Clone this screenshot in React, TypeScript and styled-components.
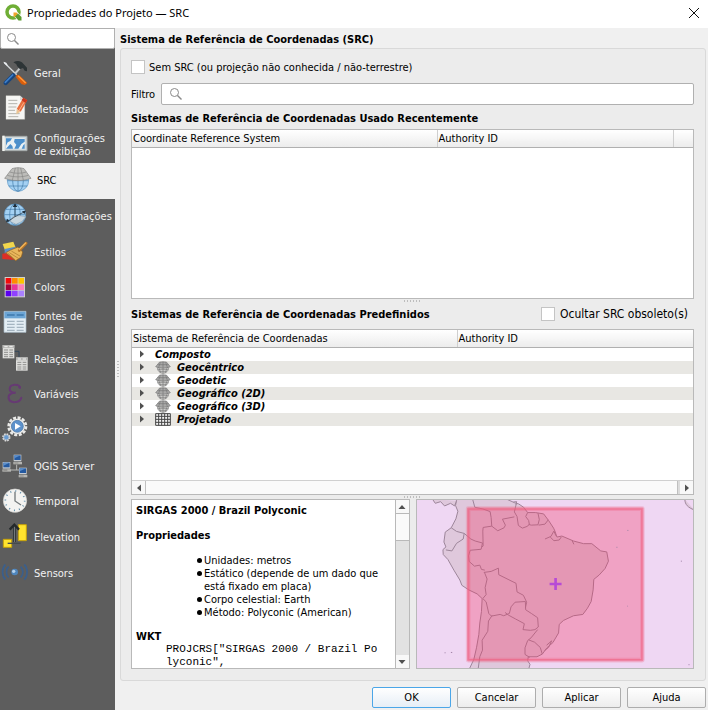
import React from "react";
import styled, { createGlobalStyle, css } from "styled-components";

const uiFont = `"DejaVu Sans Condensed", "Noto Sans", sans-serif`;

const GlobalStyle = createGlobalStyle`
  *, *::before, *::after { box-sizing: border-box; }
  body { margin: 0; background: #f0f0f0; color: #000; font: 11px/13px ${uiFont}; }
  button, input { font: inherit; color: inherit; }
  h1, h2, h3, p, ul, pre { margin: 0; padding: 0; font-size: inherit; }
`;

const Window = styled.div`
  display: flex;
  flex-direction: column;
  min-height: 100vh;
`;

const TitleBar = styled.header`
  display: flex;
  align-items: center;
  gap: 5px;
  height: 28px;
  padding: 0 8px 3px 5px;
  background: #fff;
`;

const WindowTitle = styled.h1`
  flex: 1;
  font: 400 11px/16px "Noto Sans", "Open Sans", sans-serif;
`;

const CloseButton = styled.button`
  display: flex;
  padding: 0;
  border: 0;
  background: none;
`;

const Body = styled.div`
  display: flex;
  flex: 1;
`;

const Sidebar = styled.nav`
  display: flex;
  flex-direction: column;
  flex: 0 0 115px;
  min-width: 0;
  background: #5d5d5d;
`;

const SearchBox = styled.div<{ $large?: boolean }>`
  display: flex;
  align-items: center;
  flex: ${(p) => (p.$large ? "1" : "none")};
  height: ${(p) => (p.$large ? "22px" : "21px")};
  padding-left: ${(p) => (p.$large ? "7px" : "5px")};
  border: 1px solid #b0b0b0;
  border-radius: ${(p) => (p.$large ? "2px" : "0 0 2px 2px")};
  background: #fff;
`;

const SearchInput = styled.input`
  flex: 1;
  width: 0;
  min-width: 0;
  border: 0;
  outline: 0;
  background: none;
`;

const PageList = styled.ul`
  display: grid;
  grid-template-rows: repeat(15, 1fr);
  height: 535px;
  margin-top: 7px;
  list-style: none;
`;

const PageItem = styled.li`
  display: flex;
`;

const PageButton = styled.button<{ $active?: boolean }>`
  display: flex;
  align-items: center;
  gap: ${(p) => (p.$active ? "5px" : "2px")};
  width: 100%;
  padding: 0;
  border: 0;
  background: ${(p) => (p.$active ? "#f0f0f0" : "transparent")};
  color: ${(p) => (p.$active ? "#000" : "#f2f2f2")};
  line-height: 13px;
  text-align: left;
  white-space: pre;
`;

const IconSvg = styled.svg`
  flex: none;
  width: 32px;
  height: 32px;
`;

const Splitter = styled.div`
  display: flex;
  align-items: center;
  justify-content: center;
  width: 5px;
`;

const Dots = styled.span<{ $vertical?: boolean }>`
  width: ${(p) => (p.$vertical ? "2px" : "17px")};
  height: ${(p) => (p.$vertical ? "17px" : "2px")};
  background: repeating-linear-gradient(
    ${(p) => (p.$vertical ? "180deg" : "90deg")},
    #bdbdbd 0 1px,
    transparent 1px 3px
  );
`;

const Content = styled.main`
  display: flex;
  flex-direction: column;
  flex: 1;
  min-width: 0;
  padding: 5px 2px 2px 0;
`;

const Heading = styled.h2`
  font: 700 11px/13px ${uiFont};
`;

const Group = styled.section`
  display: flex;
  flex-direction: column;
  flex: 1;
  margin: 2px 0 6px;
  padding: 11px 11px 11px 10px;
  border: 1px solid #d9d9d9;
  border-radius: 3px;
  background: #ececec;
`;

const CheckLabel = styled.label<{ $large?: boolean }>`
  display: flex;
  align-items: center;
  gap: ${(p) => (p.$large ? "5px" : "4px")};
  ${(p) => p.$large && css`font-size: 12px;`}
`;

const CheckBox = styled.input`
  appearance: none;
  width: 14px;
  height: 14px;
  margin: 0;
  border: 1px solid #c4c4c4;
  background: #fff;
`;

const FilterRow = styled.div`
  display: flex;
  align-items: center;
  gap: 6px;
  margin: 9px 0 7px;
`;

const Frame = styled.div<{ $basis: string }>`
  display: flex;
  flex-direction: column;
  flex: 1 1 ${(p) => p.$basis};
  border: 1px solid #b9b9b9;
  background: #fff;
`;

const Table = styled.table`
  width: 100%;
  border-collapse: collapse;
  table-layout: fixed;
`;

const HeadCell = styled.th<{ $width?: string }>`
  width: ${(p) => p.$width ?? "auto"};
  height: 17px;
  padding: 0 1px;
  border-right: 1px solid #cfcfcf;
  border-bottom: 1px solid #b0b0b0;
  background: linear-gradient(#fff, #ececec);
  font-weight: 400;
  text-align: left;
  &:last-child { border-right: 0; }
`;

const Row = styled.tr`
  &:nth-child(even) { background: #e8e7e3; }
`;

const Cell = styled.td`
  height: 13px;
  padding: 0;
`;

const TreeLabel = styled.div`
  display: flex;
  align-items: center;
  height: 13px;
  padding-left: 6px;
  font: italic 700 11px/13px ${uiFont};
`;

const Expander = styled.button`
  display: flex;
  width: 17px;
  padding: 0;
  border: 0;
  background: none;
`;

const TreeIcon = styled.svg`
  width: 16px;
  height: 13px;
  margin-right: 6px;
`;

const SectionBar = styled.div`
  display: flex;
  align-items: center;
  justify-content: space-between;
  height: 26px;
  padding: 0 6px 4px 0;
`;

const SplitRow = styled.div`
  display: flex;
  align-items: center;
  justify-content: center;
  height: 4px;
`;

const HScroll = styled.div`
  display: flex;
  height: 14px;
  margin-top: auto;
  border-top: 1px solid #d0d0d0;
  background: #dcdcdc;
`;

const VScroll = styled.div`
  display: flex;
  flex-direction: column;
  width: 14px;
  border-left: 1px solid #b9b9b9;
  background: #e2e2e2;
`;

const ScrollButton = styled.button`
  display: flex;
  align-items: center;
  justify-content: center;
  flex: 0 0 13px;
  padding: 0;
  border: 0;
  background: #f8f8f8;
`;

const Thumb = styled.div<{ $vertical?: boolean }>`
  ${(p) =>
    p.$vertical
      ? css`
          height: 28px;
          margin-bottom: auto;
          border: solid #b9b9b9;
          border-width: 1px 0;
        `
      : css`
          flex: 1;
          margin-right: 2px;
          border: solid #c0c0c0;
          border-width: 0 1px;
        `}
  background: #fafafa;
`;

const Lower = styled.div`
  display: grid;
  grid-template-columns: 1fr 1fr;
  gap: 6px;
  flex: 0 0 170px;
`;

const InfoFrame = styled.div`
  display: flex;
  min-width: 0;
  border: 1px solid #b9b9b9;
  background: #fff;
`;

const InfoText = styled.div`
  flex: 1;
  height: 168px;
  min-width: 0;
  padding: 4px 0 0 4px;
  overflow: hidden;
`;

const InfoTitle = styled.h3`
  margin-bottom: 12px;
  font: 700 11px/13px ${uiFont};
`;

const WktTitle = styled(InfoTitle)`
  margin-bottom: 0;
`;

const Facts = styled.ul`
  margin-bottom: 11px;
  padding-left: 68px;
  list-style: none;
`;

const Fact = styled.li`
  position: relative;
  padding-right: 8px;
  &::before {
    position: absolute;
    top: 4px;
    left: -7px;
    width: 5px;
    height: 5px;
    border-radius: 50%;
    background: #000;
    content: "";
  }
`;

const Wkt = styled.pre`
  margin-left: 30px;
  font: 11px/13px "Liberation Mono", monospace;
`;

const MapFrame = styled.div`
  border: 1px solid #b9b9b9;
  background: #efd7f3;
  overflow: hidden;
`;

const MapSvg = styled.svg`
  display: block;
  width: 100%;
  height: 168px;
`;

const Footer = styled.footer`
  display: flex;
  justify-content: flex-end;
  gap: 6px;
`;

const DialogButton = styled.button<{ $primary?: boolean }>`
  width: 79px;
  height: 21px;
  padding: 0;
  border: 1px solid ${(p) => (p.$primary ? "#4ba6e8" : "#adadad")};
  border-radius: 2px;
  background: linear-gradient(#fff, ${(p) => (p.$primary ? "#e6eef6" : "#ededed")});
`;

const Magnifier = () => (
  <svg width="14" height="14" viewBox="0 0 14 14" fill="none" stroke="#8a8a8a" aria-hidden="true">
    <circle cx="5.5" cy="5.5" r="4" />
    <path d="M8.5 8.5 12.5 12.5" strokeWidth="1.4" />
  </svg>
);

const Logo = () => (
  <svg width="17" height="17" viewBox="0 0 34 34" aria-hidden="true">
    <circle cx="16" cy="16" r="12" fill="none" stroke="#6fae35" strokeWidth="7" />
    <path d="M15 15h9l10 11v8h-7L15 22z" fill="#fff" />
    <path d="M17 17h6l3 3-6 7-3-3z" fill="#f0a52b" />
    <path d="m20 25 6-6 7 7v7h-6z" fill="#5b9c30" />
  </svg>
);

const Globe = ({ cx, cy, r }: { cx: number; cy: number; r: number }) => (
  <g stroke="#3f78a8" strokeWidth="2" fill="none">
    <circle cx={cx} cy={cy} r={r} fill="#a4d1f3" stroke="#6098c5" />
    <ellipse cx={cx} cy={cy} rx={r / 2} ry={r} />
    <path d={`M${cx - r} ${cy}h${r * 2}M${cx} ${cy - r}v${r * 2}M${cx - r + 4} ${cy + r / 2}h${r * 2 - 8}M${cx - r + 4} ${cy - r / 2}h${r * 2 - 8}`} />
  </g>
);

const Computer = ({ x, y }: { x: number; y: number }) => (
  <g transform={`translate(${x} ${y})`}>
    <path d="M1 0h23v20H1z" fill="#c7ccd2" />
    <path d="M3 2h19v14H3z" fill="#2459a0" />
    <path d="M3 2h19L3 11z" fill="#5c8ec9" />
    <path d="M0 22h26v7H0z" fill="#b5b5b1" />
    <path d="M3 25h12" stroke="#7a7a78" strokeWidth="2" />
  </g>
);

const Sheet = ({ x, y }: { x: number; y: number }) => (
  <g transform={`translate(${x} ${y})`}>
    <path d="M0 0h35v40H0z" fill="#dededc" />
    <path d="M0 0h35v9H0z" fill="#b6b6b4" />
    <path d="M4 15h12M20 15h11M4 22h12M20 22h11M4 29h12M20 29h11M4 35h12M20 35h11" stroke="#8f8f8d" strokeWidth="3" />
    <path d="M5 5h10M20 5h10" stroke="#f4f4f4" strokeWidth="3" />
  </g>
);

const swatches = ["#f50a0a", "#ff8c00", "#ffc400", "#a8003c", "#e8359a", "#ff80b8", "#5a00f0", "#9040ff", "#a980ff"];

const icons: Record<string, React.ReactNode> = {
  general: (
    <>
      <path d="M13 14 50 50" stroke="#d5d9dc" strokeWidth="4" />
      <path d="m11 11 8 3 5 9-5-1-8-8z" fill="#eceff1" />
      <path d="M62 28 44 48" stroke="#c3c7ca" strokeWidth="6" />
      <path d="M40 52 17 75" stroke="#17457f" strokeWidth="13" strokeLinecap="round" />
      <path d="M38 51 16 73" stroke="#3e7fca" strokeWidth="5" strokeLinecap="round" />
      <path d="m50 50 8 2 24 23-8 6-9-2-17-21z" fill="#d95d0c" />
      <path d="m54 53 23 22" stroke="#ff9a3d" strokeWidth="4" />
      <path d="M40 13c12-7 23-5 30 4l11 12v11l-7-2-5-8-9 4-9-10c-1-5-3-7-11-11z" fill="#2d3436" />
    </>
  ),
  metadata: (
    <>
      <path d="M18 8h42l14 13v58H18z" fill="#f6f6f4" stroke="#d3d3cf" />
      <path d="M60 8v13h14" fill="#dadad6" />
      <path d="M25 22h27M25 32h27M25 42h24M25 52h20M25 62h34M25 71h30" stroke="#b3b3ae" strokeWidth="3" />
      <path d="m70 14 12 8-20 34-12-8z" fill="#e8703f" />
      <path d="m70 14 12 8-5 8-12-8z" fill="#c8361f" />
      <path d="m50 48 12 8-13 8z" fill="#e9c795" />
      <path d="m72 28-17 28" stroke="#ffb08b" strokeWidth="3" />
    </>
  ),
  view: (
    <>
      <path d="M8 22h73v43H8z" fill="#cfd8dc" stroke="#a6acad" strokeWidth="3" />
      <path d="M18 28h56v31H18z" fill="#e9f0f3" />
      <path d="m18 28 18 0-5 8-8 4-5 10zM18 59l13-14 6 6 2 8zM44 30h30v8l-10 7-9 14H43l6-12-7-8zM70 48l4-3v14h-9z" fill="#4b8fcb" />
      <path d="M7 20h7v46H7z" fill="#f2f3ef" />
    </>
  ),
  crs: (
    <>
      <Globe cx={54} cy={47} r={32} />
      <path d="M36 11c12-4 24-4 36 0l21 29c-25 9-54 9-79 0z" fill="#bdbdba" stroke="#858583" strokeWidth="2" />
      <path d="M46 9 37 45M62 9l8 36M54 8v39M29 21c16 5 34 5 50 0M22 31c20 6 43 6 63 0" fill="none" stroke="#858583" strokeWidth="2" />
    </>
  ),
  transform: (
    <>
      <Globe cx={45} cy={44} r={32} />
      <path d="m30 64 10-15 20-2 17 3-10 14-19 9z" fill="#c9d6de" stroke="#93a5b2" strokeWidth="2" />
      <path d="M45 50V18M45 50 72 36M45 50 24 64" stroke="#1d2d3b" strokeWidth="2" />
      <path d="m45 10 7 11H38zM78 32l-5 10-7-8zM18 67l3-11 8 8z" fill="#1d2d3b" />
    </>
  ),
  styles: (
    <>
      <path d="m8 24 32-7 10 26-34 3z" fill="#f1d64c" />
      <path d="m14 39 32-7 4 20-36 8z" fill="#5a8fc8" />
      <path d="m7 53 30-5 10 24-40-3z" fill="#dc2f25" />
      <path d="m34 41 20-8 14 15-4 15-17 11-30-24z" fill="#e9b75c" stroke="#8c5a1d" strokeWidth="2" />
      <path d="m28 50 27 17M34 45l27 16M23 51l23 21" stroke="#a9752b" strokeWidth="2" />
      <path d="M58 43 78 22" stroke="#b97526" strokeWidth="9" strokeLinecap="round" />
      <path d="M58 40 77 21" stroke="#f1b75e" strokeWidth="4" strokeLinecap="round" />
    </>
  ),
  colors: (
    <>
      <path d="M14 15h61v61H14z" fill="#d0cfcb" />
      {swatches.map((fill, i) => (
        <rect key={fill} x={17 + (i % 3) * 19} y={18 + Math.floor(i / 3) * 19} width="17" height="17" fill={fill} />
      ))}
    </>
  ),
  sources: (
    <>
      <path d="M12 13h66v63H12z" fill="#e3edf4" stroke="#a7bac7" strokeWidth="2" />
      <path d="M13 14h64v20H13z" fill="#6ca5d5" />
      <path d="M21 24h23M50 24h21" stroke="#3d78ad" strokeWidth="5" />
      <path d="M21 43h23M50 43h21M21 52h23M50 52h21M21 61h23M50 61h21M21 70h23M50 70h21" stroke="#a5b5c1" strokeWidth="4" />
    </>
  ),
  relations: (
    <>
      <path d="M43 25h14v18" fill="none" stroke="#33475c" strokeWidth="3" />
      <Sheet x={8} y={6} />
      <Sheet x={48} y={43} />
    </>
  ),
  variables: (
    <>
      <path
        d="M60 26C58 14 31 13 29 29c-1 9 8 13 18 12-14 0-23 6-21 17 4 17 34 14 38-2"
        stroke="#663a73"
        strokeWidth="6"
        strokeLinecap="round"
      />
      <circle cx="59" cy="25" r="4" fill="#663a73" />
    </>
  ),
  macros: (
    <>
      <circle cx="52" cy="37" r="26" fill="none" stroke="#e9e9e7" strokeWidth="8" strokeDasharray="9 4.6" />
      <circle cx="52" cy="37" r="23" fill="#f1f1ef" />
      <circle cx="52" cy="37" r="18" fill="#5c91cb" stroke="#47719f" strokeWidth="2" />
      <path d="m45 27 17 10-17 10z" fill="#fff" />
      <circle cx="19" cy="70" r="10" fill="none" stroke="#d9dadb" strokeWidth="5" strokeDasharray="5 2.8" />
      <circle cx="19" cy="70" r="8" fill="#699bd0" stroke="#dcdcdc" strokeWidth="2" />
    </>
  ),
  server: (
    <>
      <path d="M50 44v16M22 60h45" stroke="#b8b9b7" strokeWidth="3" />
      <Computer x={40} y={14} />
      <Computer x={7} y={36} />
      <Computer x={56} y={53} />
    </>
  ),
  temporal: (
    <>
      <circle cx="45" cy="44" r="35" fill="#f3f3f1" stroke="#d6d6d3" strokeWidth="2" />
      <circle cx="45" cy="44" r="29" fill="none" stroke="#5e8ca8" strokeWidth="5" strokeDasharray="3 12.18" />
      <path d="M45 17v28l18 12" fill="none" stroke="#73797b" strokeWidth="4" />
    </>
  ),
  elevation: (
    <>
      <path d="M55 11h24v48H55zM10 55h25v24H10z" fill="#ffe32e" stroke="#c5a10a" strokeWidth="3" />
      <path d="M23 67h39" stroke="#454b4d" strokeWidth="4" />
      <path d="M43 63V17" stroke="#24292b" strokeWidth="8" />
      <path d="M43 63V17" stroke="#82898c" strokeWidth="3" />
      <path d="m29 26 14-15 14 15" fill="none" stroke="#24292b" strokeWidth="7" />
    </>
  ),
  sensors: (
    <>
      <circle cx="44" cy="45" r="10" fill="#4f86bd" />
      <circle cx="41" cy="43" r="5" fill="#b5d2ed" />
      <path d="M26 29c-9 9-9 23 0 32M62 29c9 9 9 23 0 32M16 22C5 34 5 56 16 68M73 22c11 12 11 34 0 46" fill="none" stroke="#3a5f8c" strokeWidth="5" />
    </>
  ),
};

const pages: { id: string; label: string }[] = [
  { id: "general", label: "Geral" },
  { id: "metadata", label: "Metadados" },
  { id: "view", label: "Configurações\nde exibição" },
  { id: "crs", label: "SRC" },
  { id: "transform", label: "Transformações" },
  { id: "styles", label: "Estilos" },
  { id: "colors", label: "Colors" },
  { id: "sources", label: "Fontes de\ndados" },
  { id: "relations", label: "Relações" },
  { id: "variables", label: "Variáveis" },
  { id: "macros", label: "Macros" },
  { id: "server", label: "QGIS Server" },
  { id: "temporal", label: "Temporal" },
  { id: "elevation", label: "Elevation" },
  { id: "sensors", label: "Sensors" },
];

const tree: { label: string; icon?: "globe" | "grid" }[] = [
  { label: "Composto" },
  { label: "Geocêntrico", icon: "globe" },
  { label: "Geodetic", icon: "globe" },
  { label: "Geográfico (2D)", icon: "globe" },
  { label: "Geográfico (3D)", icon: "globe" },
  { label: "Projetado", icon: "grid" },
];

const Arrow = ({ turn = 0 }: { turn?: number }) => (
  <svg width="8" height="8" viewBox="0 0 16 16" aria-hidden="true">
    <path d="M4 1 12 8 4 15z" fill="#505050" transform={`rotate(${turn} 8 8)`} />
  </svg>
);

const RowIcon = ({ kind }: { kind: "globe" | "grid" }) =>
  kind === "globe" ? (
    <TreeIcon viewBox="0 0 48 39" aria-hidden="true">
      <circle cx="24" cy="20" r="17" fill="#d5d5d3" stroke="#858585" strokeWidth="2" />
      <path d="M14 3h20l12 14c-14 6-30 6-44 0z" fill="#a9a9a8" stroke="#777" strokeWidth="2" />
      <path d="M24 2v36M16 4l-5 15 6 16M32 4l5 15-6 16M8 11h32M8 26h32M13 32h22" fill="none" stroke="#777" strokeWidth="2" />
    </TreeIcon>
  ) : (
    <TreeIcon viewBox="0 0 48 39" aria-hidden="true">
      <path d="M2 2h44v35H2zM11 2v35M20 2v35M29 2v35M38 2v35M2 10h44M2 19h44M2 28h44" fill="#f5f5f5" stroke="#444" strokeWidth="3" />
    </TreeIcon>
  );

const ExtentMap = () => (
  <MapSvg viewBox="19 28 832 508" preserveAspectRatio="none" role="img" aria-label="Extensão">
    <g fill="#dfc8dc" stroke="#9c8599" strokeWidth="3" strokeLinejoin="round">
      <path d="M138 26 135 45 142 62 136 85 122 112 104 125 100 155 106 170 97 178 98 193 112 208 130 240 148 270 154 286 175 300 200 312 215 326 213 365 208 400 205 435 198 475 190 510 176 540H355L359 525 352 514 354 502 380 502 396 494 410 475 428 459 445 430 447 404 460 392 490 378 518 374 532 355 543 335 549 300 551 268 567 255 585 235 595 213 590 185 572 182 545 160 520 160 490 152 455 137 440 140 434 122 430 113 415 90 400 70 375 66 352 66 340 50 325 40 312 36 290 26z" />
      <path d="m66 26 8 12 16-5 12 13 18-8 12 8 6-16M825 26c0 16 10 25 28 32" />
    </g>
    <g fill="none" stroke="#9c8599" strokeWidth="3" strokeLinejoin="round">
      <path d="m122 112 16 11 23 6-3 17-20 13-14 23-18-3M161 129l20 17 13 6 22 6-3 14M187 28l6 22 24 5 22 8 3 18 2 26-26 4-1 11 1 45-5 5-1 5-33 3-5 17 2 17 16 14 16-3 5 13 10 2M244 107l18 14 19-9 4-8-9-18 36-7M318 38l-6 26 8 14 4 27 12 8 14-5 7-6-2-12-9-12 6-12M355 102l8 2 20-1 4-16-4-19M385 104l19-3 10-13M404 146l18-8 9-16 6 14M420 140l11 11 16-2 6-9M486 151l5 11M220 247l22-3 22-10 1 20 28 14 24 12 3 26 19 10 10 21-4 18M222 247l8 20-6 26 3 21-10 12 10 10 8 35 8 8 26-5 11 4 17-7 5-20 12-14 31-2 1 25 17 11 19 13 2 28-10 8-14 2-22-2 4-18-26-14-22-12-10-8M382 420l-20 25-10 8-8 22 0 20 14 9M355 451l18 7 17 16 6 20M245 377l-11 17-2 31-17 27 1 30-8 20-5 37" />
      <path d="m309 34 10-1-2 9M409 467l15-13-9 20-12 9" />
    </g>
    <rect x="173" y="54" width="524" height="458" fill="#f1285b" fillOpacity="0.3" />
    <g fill="none" stroke="#ef5c7d" strokeLinejoin="round">
      <rect x="173" y="54" width="524" height="458" strokeOpacity="0.25" strokeWidth="14" />
      <rect x="173" y="54" width="524" height="458" strokeOpacity="0.55" strokeWidth="7" />
    </g>
    <path d="M436 264v36M418 282h36" stroke="#b74bd6" strokeWidth="8" />
    <path d="M102 490h3M121 489h4M813 213h3M652 120h3M619 171h3M836 526h3M652 349h2" stroke="#a083a6" strokeWidth="3" />
  </MapSvg>
);

export default function App() {
  return (
    <Window>
      <GlobalStyle />
      <TitleBar>
        <Logo />
        <WindowTitle>Propriedades do Projeto — SRC</WindowTitle>
        <CloseButton aria-label="Fechar">
          <svg width="12" height="12" viewBox="0 0 12 12" stroke="#111" aria-hidden="true">
            <path d="m1 1 10 10M11 1 1 11" />
          </svg>
        </CloseButton>
      </TitleBar>
      <Body>
        <Sidebar>
          <SearchBox>
            <Magnifier />
            <SearchInput aria-label="Buscar" />
          </SearchBox>
          <PageList>
            {pages.map(({ id, label }) => (
              <PageItem key={id}>
                <PageButton $active={id === "crs"}>
                  <IconSvg viewBox="0 0 96 96" fill="none" aria-hidden="true">
                    {icons[id]}
                  </IconSvg>
                  {label}
                </PageButton>
              </PageItem>
            ))}
          </PageList>
        </Sidebar>
        <Splitter>
          <Dots $vertical />
        </Splitter>
        <Content>
          <Heading>Sistema de Referência de Coordenadas (SRC)</Heading>
          <Group>
            <CheckLabel>
              <CheckBox type="checkbox" />
              Sem SRC (ou projeção não conhecida / não-terrestre)
            </CheckLabel>
            <FilterRow>
              <label htmlFor="filter">Filtro</label>
              <SearchBox $large>
                <Magnifier />
                <SearchInput id="filter" />
              </SearchBox>
            </FilterRow>
            <Heading>Sistemas de Referência de Coordenadas Usado Recentemente</Heading>
            <SplitRow />
            <Frame $basis="162px">
              <Table>
                <thead>
                  <tr>
                    <HeadCell>Coordinate Reference System</HeadCell>
                    <HeadCell $width="236px">Authority ID</HeadCell>
                    <HeadCell as="td" $width="20px" />
                  </tr>
                </thead>
              </Table>
            </Frame>
            <SplitRow>
              <Dots />
            </SplitRow>
            <SectionBar>
              <Heading>Sistemas de Referência de Coordenadas Predefinidos</Heading>
              <CheckLabel $large>
                <CheckBox type="checkbox" />
                Ocultar SRC obsoleto(s)
              </CheckLabel>
            </SectionBar>
            <Frame $basis="158px">
              <Table>
                <thead>
                  <tr>
                    <HeadCell>Sistema de Referência de Coordenadas</HeadCell>
                    <HeadCell $width="236px">Authority ID</HeadCell>
                  </tr>
                </thead>
                <tbody>
                  {tree.map(({ label, icon }) => (
                    <Row key={label}>
                      <Cell>
                        <TreeLabel>
                          <Expander aria-label={`Expandir ${label}`}>
                            <Arrow />
                          </Expander>
                          {icon && <RowIcon kind={icon} />}
                          {label}
                        </TreeLabel>
                      </Cell>
                      <Cell />
                    </Row>
                  ))}
                </tbody>
              </Table>
              <HScroll>
                <ScrollButton aria-label="Rolar para a esquerda">
                  <Arrow turn={180} />
                </ScrollButton>
                <Thumb />
                <ScrollButton aria-label="Rolar para a direita">
                  <Arrow />
                </ScrollButton>
              </HScroll>
            </Frame>
            <SplitRow>
              <Dots />
            </SplitRow>
            <Lower>
              <InfoFrame>
                <InfoText>
                  <InfoTitle>SIRGAS 2000 / Brazil Polyconic</InfoTitle>
                  <InfoTitle>Propriedades</InfoTitle>
                  <Facts>
                    <Fact>Unidades: metros</Fact>
                    <Fact>Estático (depende de um dado que está fixado em placa)</Fact>
                    <Fact>Corpo celestial: Earth</Fact>
                    <Fact>Método: Polyconic (American)</Fact>
                  </Facts>
                  <WktTitle>WKT</WktTitle>
                  <Wkt>{'PROJCRS["SIRGAS 2000 / Brazil Po\nlyconic",'}</Wkt>
                </InfoText>
                <VScroll>
                  <ScrollButton aria-label="Rolar para cima">
                    <Arrow turn={-90} />
                  </ScrollButton>
                  <Thumb $vertical />
                  <ScrollButton aria-label="Rolar para baixo">
                    <Arrow turn={90} />
                  </ScrollButton>
                </VScroll>
              </InfoFrame>
              <MapFrame>
                <ExtentMap />
              </MapFrame>
            </Lower>
          </Group>
          <Footer>
            <DialogButton $primary>OK</DialogButton>
            <DialogButton>Cancelar</DialogButton>
            <DialogButton>Aplicar</DialogButton>
            <DialogButton>Ajuda</DialogButton>
          </Footer>
        </Content>
      </Body>
    </Window>
  );
}
